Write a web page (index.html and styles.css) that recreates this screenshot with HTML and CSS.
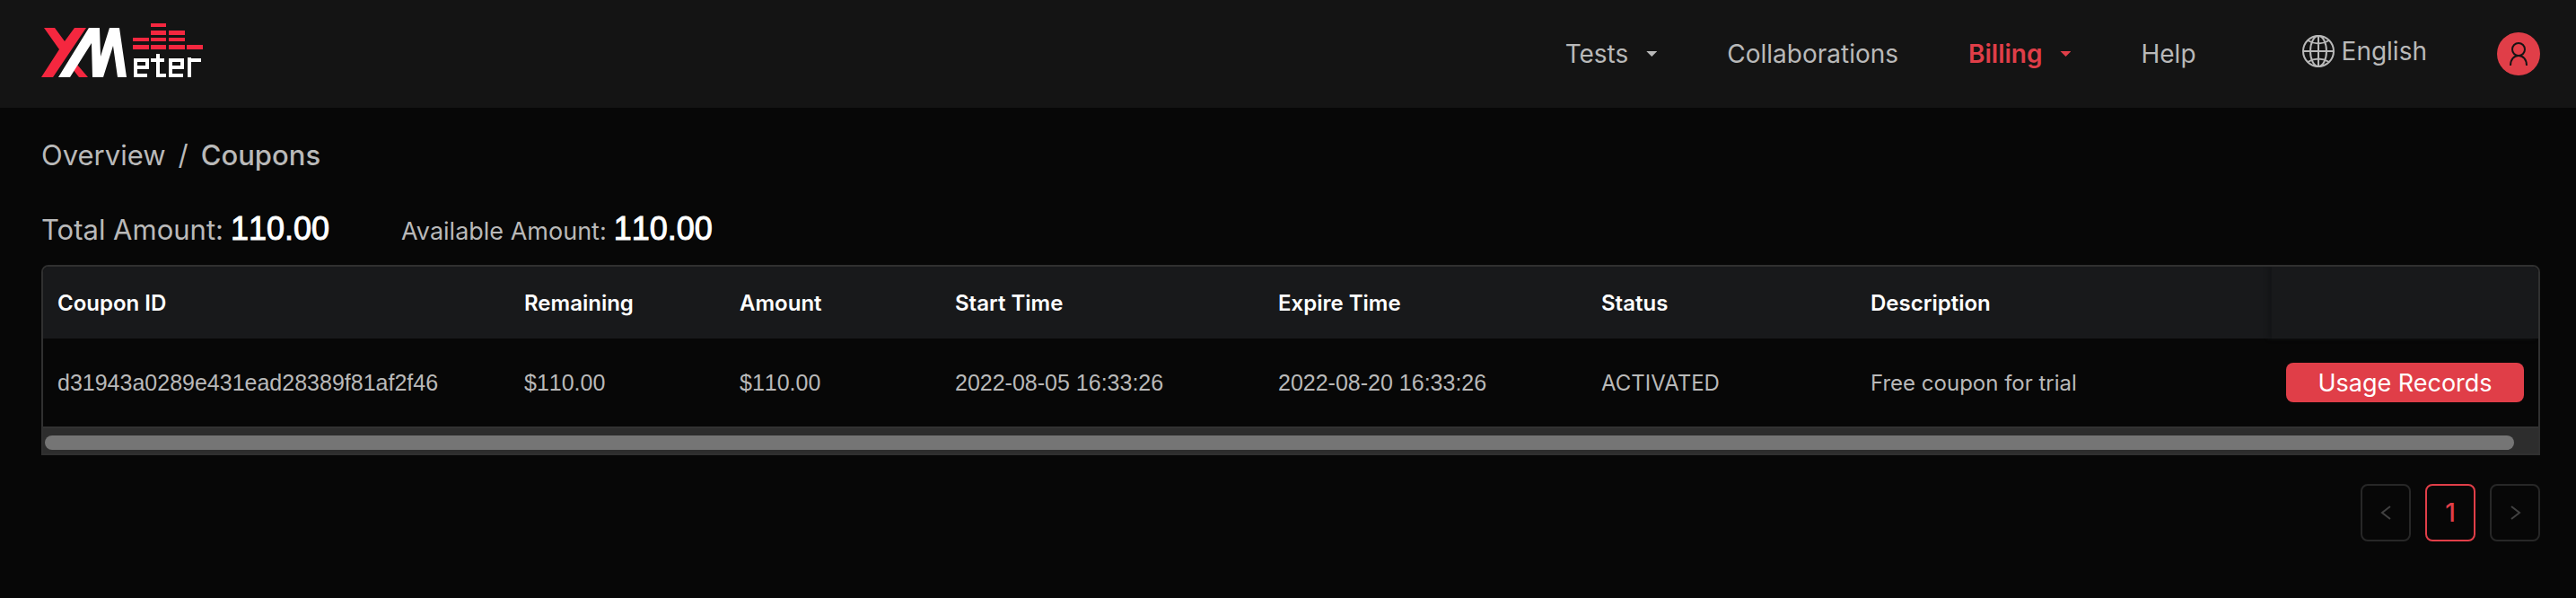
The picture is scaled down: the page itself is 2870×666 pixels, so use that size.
FILE: index.html
```html
<!DOCTYPE html>
<html lang="en">
<head>
<meta charset="utf-8">
<title>XMeter - Coupons</title>
<link rel="stylesheet" href="styles.css">
</head>
<body>
<header class="header">
  <a class="logo" href="#" aria-label="XMeter">
    <svg class="logo-mark" viewBox="0 0 180 60" aria-hidden="true">
      <g fill="#f5273f">
        <path d="M3 5H15L26 20L37 5H50L13 60H0L20 29Z"/>
        <path d="M40 46L52 60H42L35 51Z"/>
        <path d="M122 0h17v4h-17zM122 8h17v5h-17zM142 8h18v5h-18zM102 16h18v4h-18zM122 16h17v4h-17zM142 16h18v4h-18zM102 24h18v5h-18zM122 24h17v5h-17zM142 24h18v5h-18zM162 24h18v5h-18z"/>
      </g>
      <path fill="#fff" d="M53 5H65L66 37L76 5H87L95 60H85L80 25L69 60H57L56 22L32 60H19Z"/>
      <g fill="none" stroke="#fff" stroke-width="4">
        <path d="M118 58H105V41H118V49H105"/>
        <path d="M130 34V58H139M122 41H137"/>
        <path d="M158 58H144V41H157V49H144"/>
        <path d="M165 60V38M165 41H178"/>
      </g>
    </svg>
  </a>
  <nav class="nav" aria-label="Main">
    <a class="nav-link" href="#">Tests <span class="caret"></span></a>
    <a class="nav-link" href="#">Collaborations</a>
    <a class="nav-link nav-link-active" href="#">Billing <span class="caret"></span></a>
    <a class="nav-link" href="#">Help</a>
  </nav>
  <button class="language" type="button">
    <svg class="globe" viewBox="0 0 36 36" fill="none" stroke="currentColor" stroke-width="2" aria-hidden="true">
      <circle cx="18" cy="18" r="17"/>
      <ellipse cx="18" cy="18" rx="9" ry="17"/>
      <path d="M18 1V35M1 18H35M6 6Q18 13 30 6M6 30Q18 23 30 30"/>
    </svg>
    English
  </button>
  <button class="avatar" type="button" aria-label="Account">
    <svg class="avatar-icon" viewBox="0 0 24 28" fill="none" stroke="currentColor" stroke-width="2" aria-hidden="true">
      <circle cx="12" cy="9" r="7"/>
      <path d="M3 27C3 20 7 16 12 16S21 20 21 27"/>
    </svg>
  </button>
</header>
<main class="content">
  <nav class="breadcrumb" aria-label="Breadcrumb">
    <a class="breadcrumb-link" href="#">Overview</a>
    <span>/</span>
    <span class="breadcrumb-current">Coupons</span>
  </nav>
  <section class="totals">
    <p class="total">Total Amount: <strong class="amount">110.00</strong></p>
    <p class="total total-small">Available Amount: <strong class="amount">110.00</strong></p>
  </section>
  <div class="table-frame">
    <table class="table">
      <colgroup>
        <col class="col-id"><col class="col-money"><col class="col-money"><col class="col-time"><col class="col-time"><col class="col-status"><col><col class="col-action">
      </colgroup>
      <thead>
        <tr><th>Coupon ID</th><th>Remaining</th><th>Amount</th><th>Start Time</th><th>Expire Time</th><th>Status</th><th>Description</th><th class="cell-fixed" aria-label="Actions"></th></tr>
      </thead>
      <tbody>
        <tr><td class="cell-number">d31943a0289e431ead28389f81af2f46</td><td class="cell-number">$110.00</td><td class="cell-number">$110.00</td><td class="cell-number">2022-08-05 16:33:26</td><td class="cell-number">2022-08-20 16:33:26</td><td>ACTIVATED</td><td>Free coupon for trial</td><td><button class="usage-button" type="button">Usage Records</button></td></tr>
      </tbody>
    </table>
    <div class="scroll-track"><div class="scroll-thumb"></div></div>
  </div>
  <nav class="pagination" aria-label="Pagination">
    <button class="page" type="button" aria-label="Previous page" disabled><svg class="page-icon" viewBox="0 0 16 16" aria-hidden="true"><path d="M13 1L4 8L13 15"/></svg></button>
    <button class="page page-active" type="button">1</button>
    <button class="page" type="button" aria-label="Next page" disabled><svg class="page-icon" viewBox="0 0 16 16" aria-hidden="true"><path d="M4 1L13 8L4 15"/></svg></button>
  </nav>
</main>
</body>
</html>
```
FILE: styles.css
```css
* { box-sizing: border-box; }

body {
  margin: 0;
  background: #070707;
  color: #b9b9b9;
  font-family: Inter, "Liberation Sans", sans-serif;
  font-size: 24px;
}

a { color: inherit; text-decoration: none; }
button { font: inherit; cursor: pointer; }

.header {
  display: flex;
  align-items: center;
  height: 120px;
  padding: 0 40px 0 46px;
  background: #141414;
  font-size: 28px;
}
.logo { display: flex; margin-right: auto; padding-bottom: 8px; }
.logo-mark { width: 180px; height: 60px; }
.nav { display: flex; gap: 78px; margin-right: 118px; line-height: 40px; }
.nav-link { display: flex; align-items: center; gap: 20px; }
.nav-link-active { color: #e03e48; font-weight: 600; }
.caret {
  width: 12px;
  height: 6px;
  background: currentColor;
  clip-path: polygon(0 0, 100% 0, 50% 100%);
}
.language {
  display: flex;
  align-items: center;
  gap: 8px;
  margin-right: 78px;
  padding: 0 0 6px;
  border: 0;
  background: none;
  color: inherit;
}
.globe { width: 36px; height: 36px; }
.avatar {
  display: grid;
  place-items: center;
  width: 48px;
  height: 48px;
  padding: 0;
  border: 0;
  border-radius: 50%;
  background: #e03e48;
  color: #141414;
}
.avatar-icon { width: 24px; height: 28px; }

.content { padding: 33px 40px 0 46px; }
.breadcrumb { display: flex; gap: 14px; font-size: 31px; line-height: 40px; }
.breadcrumb-current { font-weight: 500; }
.totals { display: flex; align-items: baseline; gap: 80px; height: 48px; margin: 38px 0 16px; line-height: 48px; }
.total { display: flex; align-items: baseline; gap: 8px; margin: 0; font-size: 31px; }
.total-small { font-size: 27px; }
.amount {
  color: #fff;
  font-family: "Liberation Sans", Arial, sans-serif;
  font-size: 36px;
  font-weight: 400;
  font-kerning: none;
  -webkit-text-stroke: 1px currentColor;
}

.table-frame {
  overflow: hidden;
  border: 2px solid #303030;
  border-radius: 8px 8px 0 0;
}
.table { width: 100%; border-collapse: collapse; table-layout: fixed; }
.table th, .table td { padding: 0 16px; text-align: left; white-space: nowrap; }
.table th { height: 80px; background: #18191b; color: #fff; font-weight: 600; }
.table td { height: 98px; }
.table .cell-number { font-family: "Liberation Sans", Arial, sans-serif; font-size: 25px; font-kerning: none; }
.col-id { width: 520px; }
.col-money { width: 240px; }
.col-time { width: 360px; }
.col-status { width: 300px; }
.col-action { width: 297px; }
.table .cell-fixed { box-shadow: -4px 0 4px #141517; }
.usage-button {
  display: block;
  width: 100%;
  height: 44px;
  padding: 0;
  border: 0;
  border-radius: 8px;
  background: #e03e48;
  color: #fff;
  font-size: 27px;
}
.scroll-track {
  height: 30px;
  padding: 8px 27px 0 2px;
  border-top: 2px solid #333;
  background: #2d2d2d;
}
.scroll-thumb { height: 16px; border-radius: 8px; background: #757575; }

.pagination { display: flex; justify-content: flex-end; gap: 16px; margin-top: 32px; }
.page {
  display: grid;
  place-items: center;
  width: 56px;
  height: 64px;
  padding: 0;
  border: 2px solid #272727;
  border-radius: 8px;
  background: none;
  color: #414141;
  font-size: 28px;
}
.page-active { border-color: #e03e48; color: #e03e48; font-weight: 500; }
.page-icon { width: 16px; height: 16px; fill: none; stroke: currentColor; stroke-width: 2; }
```
